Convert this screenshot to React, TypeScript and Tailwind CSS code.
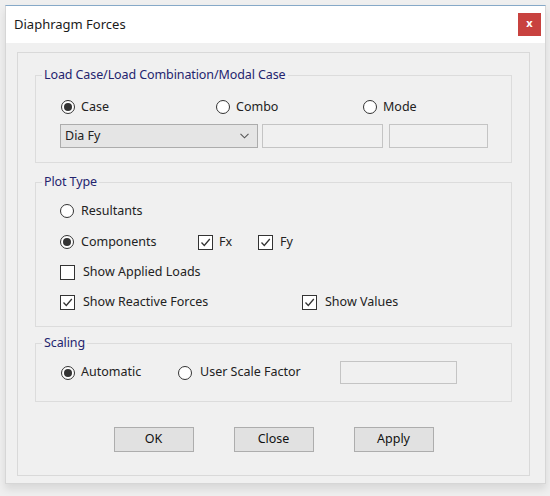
import React from 'react';

const font = "font-['Segoe_UI','Noto_Sans','Open_Sans',sans-serif]";

function Radio({ checked = false }: { checked?: boolean }) {
  return (
    <span className="flex h-[14px] w-[14px] shrink-0 items-center justify-center rounded-full border border-[#333] bg-white">
      {checked && <span className="h-[8px] w-[8px] rounded-full bg-[#333]" />}
    </span>
  );
}

function Check({ checked = false }: { checked?: boolean }) {
  return (
    <span className="flex h-[15px] w-[15px] shrink-0 items-center justify-center border border-[#333] bg-white">
      {checked && (
        <svg width="11" height="11" viewBox="0 0 11 11">
          <path d="M1.5 5.5 L4.3 8.5 L9.8 2" stroke="#333" strokeWidth="1.3" fill="none" />
        </svg>
      )}
    </span>
  );
}

function Group({ title, className, children }: { title: string; className?: string; children: React.ReactNode }) {
  return (
    <fieldset className={`border border-[#dcdcdc] ${className ?? ''}`}>
      <legend className="ml-[6px] px-[2px] text-[12.5px] leading-[16px] tracking-[-0.1px] text-[#24246e]">{title}</legend>
      {children}
    </fieldset>
  );
}

function Button({ label }: { label: string }) {
  return (
    <div className="flex h-[25px] w-[80px] items-center justify-center border border-[#adadad] bg-[#e1e1e1] text-[12.5px] text-[#111]">
      {label}
    </div>
  );
}

export default function App() {
  return (
    <div className={`h-[496px] w-[550px] overflow-hidden bg-[#efefef] pl-[5px] pt-[5px] text-[#222] ${font}`}>
      <div className="flex h-[479px] w-[541px] flex-col border border-[#d6d6d6] border-t-[#86a9c8] bg-[#f0f0f0] shadow-[0_5px_8px_rgba(0,0,0,0.10)]">
        {/* title bar */}
        <div className="flex h-[37px] items-center justify-between bg-white pl-[8px] pr-[4px]">
          <span className="pt-[1px] text-[13px] text-[#1a1a1a]">Diaphragm Forces</span>
          <span className="flex h-[23px] w-[23px] items-center justify-center bg-[#c8423f] pb-[2px] text-[11px] font-bold text-white">
            x
          </span>
        </div>

        {/* body */}
        <div className="flex flex-1 flex-col pb-[7px] pl-[11px] pr-[15px] pt-[9px]">
          <div className="flex flex-1 flex-col border border-[#d9d9d9] px-[17px] pt-[14px]">
            <Group title="Load Case/Load Combination/Modal Case" className="pb-[14px]">
              <div className="mt-[16px] flex h-[16px] items-center pl-[25px] text-[12.5px]">
                <div className="flex w-[155px] items-center gap-[6px]">
                  <Radio checked />
                  <span>Case</span>
                </div>
                <div className="flex w-[147px] items-center gap-[6px]">
                  <Radio />
                  <span>Combo</span>
                </div>
                <div className="flex items-center gap-[6px]">
                  <Radio />
                  <span>Mode</span>
                </div>
              </div>
              <div className="mt-[9px] flex items-center pl-[24px]">
                <div className="flex h-[24px] w-[198px] items-center justify-between border border-[#acacac] bg-[#e5e5e5] pl-[4px] pr-[8px] text-[12.5px]">
                  <span>Dia Fy</span>
                  <svg width="9" height="6" viewBox="0 0 9 6">
                    <path d="M0.5 0.8 L4.5 4.8 L8.5 0.8" stroke="#555" strokeWidth="1.1" fill="none" />
                  </svg>
                </div>
                <div className="ml-[4px] h-[24px] w-[121px] border border-[#c4c4c4] bg-[#f0f0f0]" />
                <div className="ml-[6px] h-[24px] w-[99px] border border-[#c4c4c4] bg-[#f0f0f0]" />
              </div>
            </Group>

            <Group title="Plot Type" className="mt-[11px] pb-[16px]">
              <div className="mt-[13px] flex flex-col gap-[14px] pl-[24px] text-[12.5px]">
                <div className="flex h-[16px] items-center gap-[7px]">
                  <Radio />
                  <span>Resultants</span>
                </div>
                <div className="mt-[1px] flex h-[16px] items-center">
                  <div className="flex w-[138px] items-center gap-[7px]">
                    <Radio checked />
                    <span>Components</span>
                  </div>
                  <div className="flex w-[60px] items-center gap-[6px]">
                    <Check checked />
                    <span>Fx</span>
                  </div>
                  <div className="flex items-center gap-[7px]">
                    <Check checked />
                    <span>Fy</span>
                  </div>
                </div>
                <div className="flex h-[16px] items-center gap-[8px]">
                  <Check />
                  <span>Show Applied Loads</span>
                </div>
                <div className="flex h-[16px] items-center">
                  <div className="flex w-[242px] items-center gap-[8px]">
                    <Check checked />
                    <span>Show Reactive Forces</span>
                  </div>
                  <div className="flex items-center gap-[8px]">
                    <Check checked />
                    <span>Show Values</span>
                  </div>
                </div>
              </div>
            </Group>

            <Group title="Scaling" className="mt-[8px] pb-[17px]">
              <div className="mt-[10px] flex h-[23px] items-center pl-[25px] text-[12.5px]">
                <div className="flex w-[117px] items-center gap-[6px]">
                  <Radio checked />
                  <span>Automatic</span>
                </div>
                <div className="flex w-[162px] items-center gap-[8px]">
                  <Radio />
                  <span>User Scale Factor</span>
                </div>
                <div className="h-[23px] w-[117px] border border-[#c4c4c4] bg-[#f0f0f0]" />
              </div>
            </Group>

            <div className="mt-[25px] flex justify-center gap-[40px]">
              <Button label="OK" />
              <Button label="Close" />
              <Button label="Apply" />
            </div>
          </div>
        </div>
      </div>
    </div>
  );
}
